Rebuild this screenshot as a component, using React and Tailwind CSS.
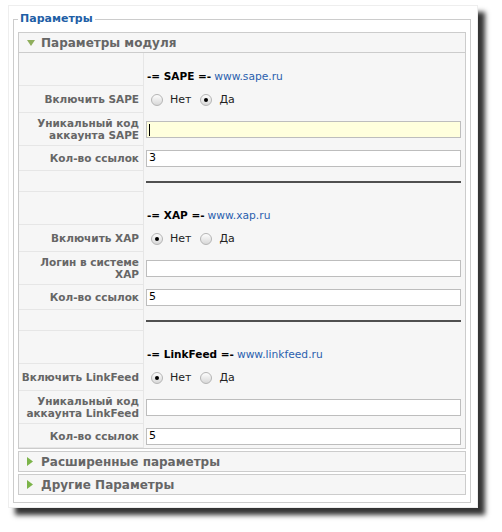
import React from 'react'

const rows = [
  { type: 'head', name: 'SAPE', url: 'www.sape.ru' },
  { type: 'radio', label: 'Включить SAPE', on: true },
  { type: 'input', label: ['Уникальный код', 'аккаунта SAPE'], value: '', focus: true },
  { type: 'input', label: ['Кол-во ссылок'], value: '3' },
  { type: 'hr' },
  { type: 'head', name: 'XAP', url: 'www.xap.ru' },
  { type: 'radio', label: 'Включить XAP', on: false },
  { type: 'input', label: ['Логин в системе', 'XAP'], value: '' },
  { type: 'input', label: ['Кол-во ссылок'], value: '5' },
  { type: 'hr' },
  { type: 'head', name: 'LinkFeed', url: 'www.linkfeed.ru' },
  { type: 'radio', label: 'Включить LinkFeed', on: false },
  { type: 'input', label: ['Уникальный код', 'аккаунта LinkFeed'], value: '' },
  { type: 'input', label: ['Кол-во ссылок'], value: '5', last: true },
]

const Radio = ({ checked }) => (
  <span className="w-[12px] h-[12px] rounded-full border border-[#b5b5b5] bg-gradient-to-b from-[#fdfdfd] to-[#d8d8d8] flex items-center justify-center shrink-0">
    {checked && <span className="w-[4px] h-[4px] rounded-full bg-black" />}
  </span>
)

const Arrow = ({ open }) =>
  open ? (
    <svg width="8" height="6" viewBox="0 0 8 6" className="shrink-0">
      <path d="M0 0 L8 0 L4 6 Z" fill="#8fae5c" />
    </svg>
  ) : (
    <svg width="6" height="9" viewBox="0 0 6 9" className="shrink-0">
      <path d="M0 0 L6 4.5 L0 9 Z" fill="#7cb44a" />
    </svg>
  )

const Row = ({ row }) => {
  let h = 'h-[25px]'
  if (row.type === 'head') h = 'h-[33px]'
  if (row.type === 'radio') h = 'h-[27px]'
  if (row.type === 'hr') h = 'h-[21px]'
  if (row.type === 'input' && row.label.length > 1) h = 'h-[33px]'
  if (row.last) h = 'h-[24px]'

  return (
    <div className={`flex ${h}`}>
      <div className="w-[125px] shrink-0 border-r border-b border-[#e6e6e6] flex flex-col justify-center items-end pr-[4px] text-[10.5px] leading-[12px] font-bold text-[#666] text-right whitespace-nowrap">
        {row.type === 'radio' && <span>{row.label}</span>}
        {row.type === 'input' && row.label.map((l) => <span key={l}>{l}</span>)}
      </div>
      <div className="flex-1 flex pl-[2px] pr-[4px]">
        {row.type === 'head' && (
          <div className="flex items-end pb-[1px] pl-[1px] text-[11px] text-black whitespace-nowrap">
            <span className="font-bold text-[10.5px]">-= {row.name} =-</span>
            <span className="ml-[3px] text-[#2a5fae] text-[10.7px]">{row.url}</span>
          </div>
        )}
        {row.type === 'radio' && (
          <div className="flex items-center pl-[5px] text-[11px] text-[#222]">
            <Radio checked={!row.on} />
            <span className="ml-[7px] mt-[2px]">Нет</span>
            <span className="ml-[9px]"><Radio checked={row.on} /></span>
            <span className="ml-[7px] mt-[2px]">Да</span>
          </div>
        )}
        {row.type === 'input' && (
          <div className="flex items-center w-full">
            <div className={`w-[315px] h-[17px] border border-[#bdbdbd] flex items-center pl-[2px] text-[11px] text-black ${row.focus ? 'bg-[#ffffdd]' : 'bg-white'}`}>
              {row.focus ? <span className="w-[1px] h-[12px] bg-black" /> : row.value}
            </div>
          </div>
        )}
        {row.type === 'hr' && (
          <div className="flex items-center w-full">
            <div className="w-[315px] h-[2px] bg-[#505050]" />
          </div>
        )}
      </div>
    </div>
  )
}

const ClosedPanel = ({ title, className }) => (
  <div className={`border border-[#cccccc] bg-[#f6f6f6] h-[21px] flex items-center pl-[8px] gap-[8px] ${className}`}>
    <Arrow />
    <span className="text-[12px] font-bold text-[#666]">{title}</span>
  </div>
)

export default function App() {
  return (
    <div className="min-h-screen bg-white pt-[5px] pl-[8px] font-['DejaVu_Sans',sans-serif]">
      <div className="w-[470px] bg-white border border-[#eeeeee] shadow-[7px_7px_5px_rgba(0,0,0,0.8)] pl-[4px] pr-[6px] pt-[6px] pb-[4px]">
        <fieldset className="border border-[#cccccc] px-[4px] pb-[7px]">
          <legend className="ml-0 px-[2px] text-[11px] leading-[14px] font-bold text-[#1f5fa6]">Параметры</legend>
          <div className="mt-[6px] border border-[#cccccc] bg-[#f6f6f6]">
            <div className="h-[20px] border-b border-[#cccccc] flex items-center pl-[8px] gap-[6px]">
              <Arrow open />
              <span className="text-[12px] font-bold text-[#666]">Параметры модуля</span>
            </div>
            {rows.map((r, i) => (
              <Row key={i} row={r} />
            ))}
          </div>
          <ClosedPanel title="Расширенные параметры" className="mt-[2px]" />
          <ClosedPanel title="Другие Параметры" className="mt-[2px]" />
        </fieldset>
      </div>
    </div>
  )
}
